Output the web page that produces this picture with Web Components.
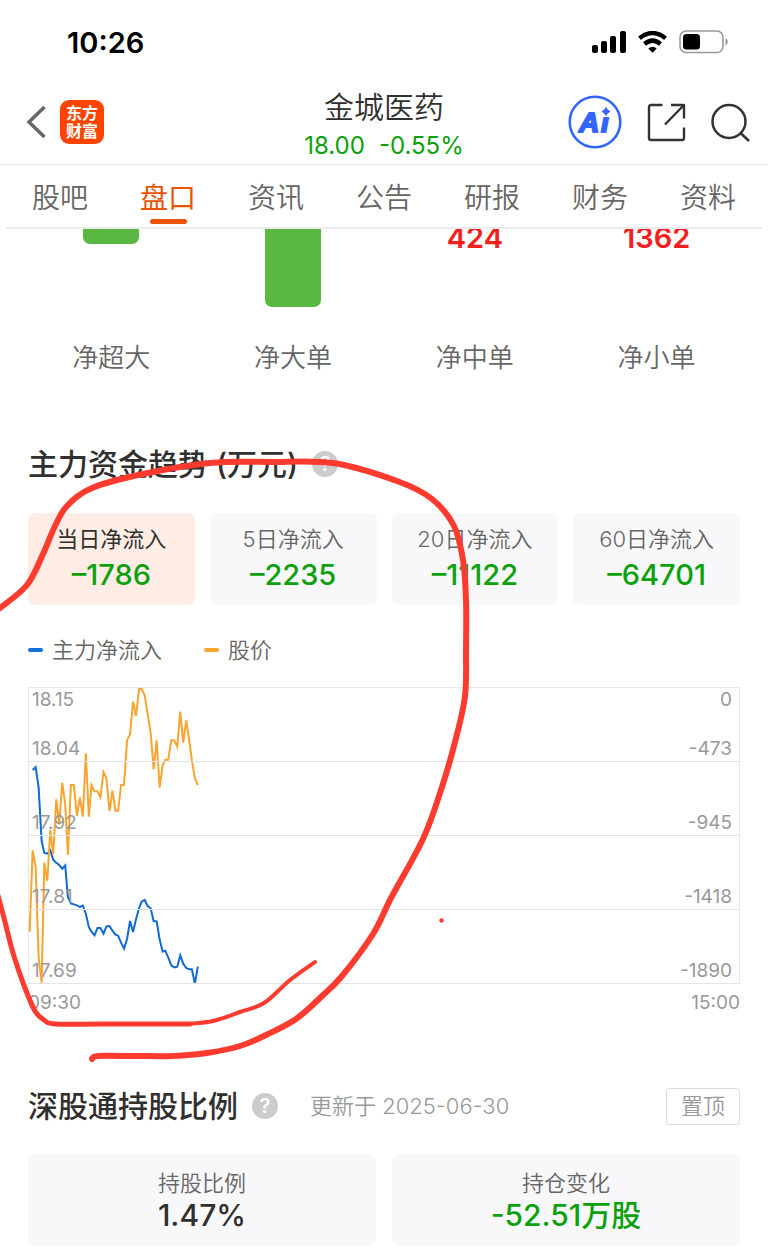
<!DOCTYPE html>
<html lang="zh-CN">
<head>
<meta charset="utf-8">
<meta name="viewport" content="width=device-width, initial-scale=1">
<title>金城医药</title>
<style>
  body {
    margin: 0;
    background: #fff;
    color: #303030;
    font-family: Inter, "Noto Sans CJK SC", sans-serif;
  }
</style>
</head>
<body>
<quote-page>
  <status-bar slot="top" time="10:26"></status-bar>
  <stock-header slot="top" name="金城医药" price="18.00" change="-0.55%"></stock-header>
  <page-tabs slot="top" labels="股吧,盘口,资讯,公告,研报,财务,资料" active="1"></page-tabs>

  <order-flow>
    <flow-item label="净超大" bar="15"></flow-item>
    <flow-item label="净大单" bar="78"></flow-item>
    <flow-item label="净中单" value="424"></flow-item>
    <flow-item label="净小单" value="1362"></flow-item>
  </order-flow>

  <section-title style="margin-top:70px">主力资金趋势 (万元)</section-title>
  <period-picker></period-picker>
  <trend-chart></trend-chart>

  <section-title style="margin-top:67px">深股通持股比例
    <span slot="note">更新于 2025-06-30</span>
    <pin-button slot="action">置顶</pin-button>
  </section-title>
  <stat-row>
    <stat-card label="持股比例" value="1.47%"></stat-card>
    <stat-card label="持仓变化" value="-52.51万股" down></stat-card>
  </stat-row>

  <ink-layer slot="ink"></ink-layer>
</quote-page>

<script>
class QuotePage extends HTMLElement {
  constructor() {
    super();
    this.attachShadow({ mode: "open" }).innerHTML =
`<style>
  :host {
    display: block;
    position: relative;
    overflow: hidden;
  }
  main {
    display: flex;
    flex-direction: column;
    padding: 0 28px 2px;
  }
</style>
<slot name="top"></slot>
<main><slot></slot></main>
<slot name="ink"></slot>`;
  }
}

class StatusBar extends HTMLElement {
  connectedCallback() {
    this.attachShadow({ mode: "open" }).innerHTML =
`<style>
  :host {
    display: flex;
    justify-content: space-between;
    align-items: center;
    box-sizing: border-box;
    height: 80px;
    padding: 4px 40px 0 67px;
    color: #000;
  }
  time {
    font-size: 29px;
    font-weight: 600;
  }
  .icons {
    display: flex;
    align-items: center;
    gap: 12px;
  }
</style>
<time>${this.getAttribute("time")}</time>
<div class="icons">
  <svg width="34" height="22" viewBox="0 0 34 22">
    <rect x="0" y="14" width="6" height="8" rx="2"/>
    <rect x="9" y="10" width="6" height="12" rx="2"/>
    <rect x="18" y="5" width="6" height="17" rx="2"/>
    <rect x="28" y="0" width="6" height="22" rx="2"/>
  </svg>
  <svg width="29" height="22" viewBox="0 0 29 22">
    <path d="M1.500 7.200Q14.500-3.200 27.500 7.200" fill="none" stroke="#000" stroke-width="4.400"/>
    <path d="M6.500 13Q14.500 6.200 22.500 13" fill="none" stroke="#000" stroke-width="4.400"/>
    <path d="M10.300 17.600Q14.500 14 18.700 17.600L14.500 21.800Z"/>
  </svg>
  <svg width="49" height="24" viewBox="0 0 49 24">
    <rect x="1" y="1" width="43" height="21.500" rx="6" fill="none" stroke="#999" stroke-width="1.600"/>
    <rect x="4" y="4" width="17" height="15.500" rx="3.500"/>
    <path d="M46.500 8v7.500q2.300-1.200 2.300-3.700t-2.300-3.800z" fill="#999"/>
  </svg>
</div>`;
  }
}

class StockHeader extends HTMLElement {
  connectedCallback() {
    this.attachShadow({ mode: "open" }).innerHTML =
`<style>
  :host {
    display: grid;
    grid-template-columns: 1fr auto 1fr;
    align-items: center;
    height: 84px;
    padding: 0 18px;
    border-bottom: 1px solid #ebebed;
  }
  button, a {
    display: block;
    padding: 0;
    border: 0;
    background: none;
    color: inherit;
    font: inherit;
    text-decoration: none;
  }
  svg {
    display: block;
  }
  .left, .right {
    display: flex;
    align-items: center;
  }
  .left {
    gap: 14px;
    padding-left: 8px;
  }
  .right {
    gap: 25px;
    justify-content: flex-end;
  }
  .logo {
    box-sizing: border-box;
    width: 44px;
    height: 44px;
    padding: 4px 0;
    border-radius: 9px;
    background: #ff4400;
    color: #fff;
    font-size: 16px;
    font-weight: 700;
    line-height: 18px;
    text-align: center;
  }
  .mid {
    align-self: end;
    text-align: center;
  }
  h1 {
    margin: 0;
    font-size: 30px;
    font-weight: 350;
    line-height: 42px;
  }
  p {
    display: flex;
    gap: 14px;
    margin: 0;
    color: #0ba10b;
    font-size: 24px;
    line-height: 36px;
  }
</style>
<div class="left">
  <button aria-label="返回">
    <svg width="20" height="34" viewBox="0 0 20 34" fill="none" stroke="#666" stroke-width="3.500"><path d="M18.500 2L3 17L18.500 32"/></svg>
  </button>
  <a class="logo" href="#">东方<br>财富</a>
</div>
<div class="mid">
  <h1>${this.getAttribute("name")}</h1>
  <p><span>${this.getAttribute("price")}</span><span>${this.getAttribute("change")}</span></p>
</div>
<div class="right">
  <button>
    <svg width="54" height="54" viewBox="0 0 54 54">
      <text x="11" y="37" font-family="Liberation Sans, sans-serif" font-size="28" font-weight="700" font-style="italic" fill="#3366ff" stroke="#3366ff" stroke-width="2" stroke-linejoin="round">A<tspan x="33">i</tspan></text>
      <path d="M33 11h11v11h-11z" fill="#fff"/>
      <circle cx="27" cy="27" r="25.300" fill="none" stroke="#3366ff" stroke-width="2.600"/>
      <path d="M38 12.500q1 3 4 4q-3 1-4 4q-1-3-4-4q3-1 4-4z" fill="#3366ff" stroke="#3366ff"/>
    </svg>
  </button>
  <button aria-label="分享">
    <svg width="39" height="39" viewBox="0 0 39 39" fill="none" stroke="#333" stroke-width="2.400" stroke-linejoin="round">
      <path d="M15.500 2H4Q2 2 2 4V35Q2 37 4 37H35Q37 37 37 35V24.500"/>
      <path d="M24 2H37V15.500M37 2L18 21.500"/>
    </svg>
  </button>
  <button aria-label="搜索">
    <svg width="39" height="39" viewBox="0 0 39 39" fill="none" stroke="#333" stroke-width="2.500">
      <circle cx="18" cy="18.500" r="16.500"/>
      <path d="M29.500 30L38 38"/>
    </svg>
  </button>
</div>`;
  }
}

class PageTabs extends HTMLElement {
  connectedCallback() {
    const active = Number(this.getAttribute("active"));
    const tabs = this.getAttribute("labels").split(",").map((t, i) =>
      `<button role="tab" aria-selected="${i === active}">${t}</button>`).join("");

    this.attachShadow({ mode: "open" }).innerHTML =
`<style>
  :host {
    display: block;
    padding: 0 6px;
  }
  div {
    display: flex;
    height: 62px;
    border-bottom: 2px solid #ebebed;
  }
  button {
    flex: 1;
    display: flex;
    flex-direction: column;
    align-items: center;
    justify-content: flex-end;
    padding: 0 0 3px;
    border: 0;
    background: none;
    color: #666;
    font: inherit;
    font-size: 28px;
    font-weight: 350;
    line-height: 42px;
  }
  button::after {
    content: "";
    width: 37px;
    height: 5px;
    border-radius: 3px;
  }
  [aria-selected="true"] {
    color: #ea5504;
    font-weight: 400;
  }
  [aria-selected="true"]::after {
    background: #ea5504;
  }
</style>
<div role="tablist">${tabs}</div>`;
  }
}

class OrderFlow extends HTMLElement {
  constructor() {
    super();
    this.attachShadow({ mode: "open" }).innerHTML =
`<style>
  :host {
    display: grid;
    grid-template-columns: repeat(4, 1fr);
    gap: 15px;
    overflow: hidden;
  }
</style>
<slot></slot>`;
  }
}

class FlowItem extends HTMLElement {
  connectedCallback() {
    const bar = this.getAttribute("bar");
    const body = bar
      ? `<i style="height:${bar}px"></i>`
      : `<b>${this.getAttribute("value")}</b>`;

    this.attachShadow({ mode: "open" }).innerHTML =
`<style>
  :host {
    display: flex;
    flex-direction: column;
    align-items: center;
  }
  .body {
    height: 111px;
  }
  i {
    display: block;
    width: 56px;
    border-radius: 0 0 7px 7px;
    background: #5ab842;
  }
  b {
    display: block;
    color: #f42020;
    font-size: 29px;
    font-weight: 600;
    line-height: 17px;
  }
  span {
    color: #666;
    font-size: 26px;
    font-weight: 350;
    line-height: 36px;
  }
</style>
<div class="body">${body}</div>
<span>${this.getAttribute("label")}</span>`;
  }
}

class SectionTitle extends HTMLElement {
  constructor() {
    super();
    this.attachShadow({ mode: "open" }).innerHTML =
`<style>
  :host {
    display: flex;
    align-items: center;
    height: 36px;
  }
  h2 {
    margin: 0 14px 0 0;
    font-size: 30px;
    font-weight: 500;
    line-height: 36px;
    white-space: nowrap;
  }
  button {
    width: 26px;
    height: 26px;
    padding: 0;
    border: 0;
    border-radius: 50%;
    background: #ccc;
    color: #fff;
    font: inherit;
    font-size: 20px;
    font-weight: 600;
    line-height: 26px;
  }
  ::slotted([slot="note"]) {
    margin-left: 32px;
    color: #999;
    font-size: 22px;
    font-weight: 350;
    line-height: 36px;
  }
  ::slotted([slot="action"]) {
    margin-left: auto;
  }
</style>
<h2><slot></slot></h2>
<button aria-label="说明">?</button>
<slot name="note"></slot>
<slot name="action"></slot>`;
  }
}

class PinButton extends HTMLElement {
  constructor() {
    super();
    this.attachShadow({ mode: "open" }).innerHTML =
`<style>
  :host {
    display: block;
  }
  button {
    display: block;
    height: 37px;
    padding: 0 14px;
    border: 1px solid #ddd;
    border-radius: 3px;
    background: #fff;
    color: #999;
    font: inherit;
    font-size: 22px;
    font-weight: 350;
    line-height: 35px;
  }
</style>
<button><slot></slot></button>`;
  }
}

class PeriodPicker extends HTMLElement {
  #periods = [
    ["当日净流入", "–1786"],
    ["5日净流入", "–2235"],
    ["20日净流入", "–11122"],
    ["60日净流入", "–64701"],
  ];

  connectedCallback() {
    this.attachShadow({ mode: "open" }).innerHTML =
`<style>
  :host {
    display: grid;
    grid-template-columns: repeat(4, 1fr);
    gap: 15px;
    margin-top: 31px;
  }
  button {
    min-width: 0;
    padding: 10px 0;
    border: 0;
    border-radius: 7px;
    background: #f8f8fb;
    color: #666;
    font: inherit;
    font-size: 22px;
    font-weight: 350;
    line-height: 32px;
  }
  button.on {
    background: #ffece5;
    color: #303030;
    font-weight: 400;
  }
  b {
    display: block;
    color: #0ba10b;
    font-size: 29px;
    font-weight: 500;
    line-height: 40px;
  }
</style>
${this.#periods.map(([label, value]) => `<button>${label}<b>${value}</b></button>`).join("\n")}`;

    const buttons = this.shadowRoot.querySelectorAll("button");
    const select = (on) => buttons.forEach((b) => b.classList.toggle("on", b === on));
    buttons.forEach((b) => b.addEventListener("click", () => select(b)));
    select(buttons[0]);
  }
}

// y runs from 0 (top) to 888 (bottom), one point per minute sample
const PRICE = [
  731, 487, 539, 809, 884, 524, 579, 426, 499, 334, 409, 284, 349, 501, 291,
  291, 384, 329, 386, 196, 386, 291, 310, 310, 328, 252, 272, 369, 309, 368,
  368, 291, 291, 157, 139, 41, 84, 3, 3, 22, 79, 134, 244, 157, 299, 232, 215,
  215, 157, 157, 176, 71, 164, 97, 157, 217, 271, 291,
];
const INFLOW = [
  246, 237, 299, 459, 495, 497, 487, 516, 524, 531, 542, 532, 627, 646, 649,
  652, 657, 653, 677, 717, 731, 742, 720, 720, 737, 715, 714, 728, 740, 743,
  764, 782, 753, 699, 732, 694, 661, 641, 636, 654, 661, 699, 700, 754, 791,
  788, 809, 832, 838, 836, 802, 827, 840, 844, 844, 887, 836,
];

class TrendChart extends HTMLElement {
  #line(values, start, color) {
    const step = 8.88;
    const points = values.map((y, i) => `${Math.round(2 + (i + start) * step)},${y}`).join(" ");
    return `<polyline points="${points}" stroke="${color}"/>`;
  }

  connectedCallback() {
    const rows = [["18.04", "-473"], ["17.92", "-945"], ["17.81", "-1418"], ["17.69", "-1890"]];

    this.attachShadow({ mode: "open" }).innerHTML =
`<style>
  :host {
    display: block;
    margin-top: 25px;
    color: #999;
    font-size: 19px;
  }
  .legend {
    display: flex;
    gap: 42px;
    margin-bottom: 17px;
    color: #666;
    font-size: 22px;
    font-weight: 350;
    line-height: 40px;
  }
  .legend span {
    display: flex;
    align-items: center;
    gap: 9px;
  }
  .legend span::before {
    content: "";
    width: 15px;
    height: 4px;
    border-radius: 2px;
    background: var(--c);
  }
  .plot {
    position: relative;
    border: 1px solid #e8e8e8;
    border-width: 1px 1px 0;
  }
  .row {
    position: relative;
    display: flex;
    flex-wrap: wrap;
    justify-content: space-between;
    align-content: flex-end;
    box-sizing: border-box;
    height: 74px;
    padding: 0 7px 0 3px;
    border-bottom: 1px solid #e3e3e3;
    line-height: 24px;
  }
  .row:nth-of-type(1) {
    align-content: space-between;
  }
  .row span {
    width: 50%;
  }
  .row span:nth-child(even) {
    text-align: right;
  }
  svg {
    position: absolute;
    inset: 0;
    width: 100%;
    height: 100%;
    overflow: visible;
  }
  polyline {
    fill: none;
    stroke-width: 2;
    vector-effect: non-scaling-stroke;
  }
  .time {
    display: flex;
    justify-content: space-between;
    line-height: 37px;
  }
</style>
<div class="legend">
  <span style="--c:#1271dc">主力净流入</span>
  <span style="--c:#faa32d">股价</span>
</div>
<div class="plot">
  <svg viewBox="0 0 2136 888" preserveAspectRatio="none">
    ${this.#line(INFLOW, 1, "#1169d4")}
    ${this.#line(PRICE, 0, "#f8a42f")}
  </svg>
  ${rows.map(([l, r], i) => `<div class="row">${i ? "" : "<span>18.15</span><span>0</span>"}<span>${l}</span><span>${r}</span></div>`).join("\n  ")}
</div>
<div class="time"><span>09:30</span><span>15:00</span></div>`;
  }
}

class StatRow extends HTMLElement {
  constructor() {
    super();
    this.attachShadow({ mode: "open" }).innerHTML =
`<style>
  :host {
    display: grid;
    grid-template-columns: 1fr 1fr;
    gap: 16px;
    margin-top: 30px;
  }
</style>
<slot></slot>`;
  }
}

class StatCard extends HTMLElement {
  connectedCallback() {
    this.attachShadow({ mode: "open" }).innerHTML =
`<style>
  :host {
    display: flex;
    flex-direction: column;
    align-items: center;
    padding: 13px 0 15px;
    border-radius: 7px;
    background: #f8f8fb;
    line-height: 32px;
  }
  span {
    color: #666;
    font-size: 22px;
    font-weight: 350;
  }
  b {
    font-size: 30px;
    font-weight: 500;
  }
  :host([down]) b {
    color: #0ba10b;
  }
</style>
<span>${this.getAttribute("label")}</span>
<b>${this.getAttribute("value")}</b>`;
  }
}

// freehand marker strokes above the whole page
class InkLayer extends HTMLElement {
  #strokes = [
    {
      width: 6,
      points: [
        [-6, 612], [0, 608], [27, 585], [43, 554], [55, 526], [67, 506], [92, 488],
        [143, 474], [210, 463], [270, 462], [333, 463], [397, 481], [432, 499],
        [454, 526], [463, 560], [466, 600], [466, 650], [465, 696], [455, 742],
        [441, 790], [423, 839], [391, 898], [373, 934], [342, 976], [322, 996],
        [296, 1019], [266, 1035], [240, 1046], [207, 1053], [173, 1056],
        [135, 1056], [98, 1056], [92, 1059],
      ],
    },
    {
      width: 5,
      points: [
        [-3, 892], [4, 918], [13, 953], [25, 988], [35, 1011], [44, 1020],
        [55, 1024], [100, 1024], [150, 1024], [190, 1024],
      ],
    },
    {
      width: 4,
      points: [[188, 1024], [213, 1021], [240, 1012], [264, 1003], [290, 980], [315, 962]],
    },
  ];

  // Catmull-Rom spline through the points
  #path(p) {
    let d = `M${p[0]}`;
    for (let i = 0; i < p.length - 1; i++) {
      const a = p[i - 1] || p[i];
      const b = p[i];
      const c = p[i + 1];
      const e = p[i + 2] || c;
      d += `C${b[0] + (c[0] - a[0]) / 6},${b[1] + (c[1] - a[1]) / 6} ${c[0] - (e[0] - b[0]) / 6},${c[1] - (e[1] - b[1]) / 6} ${c}`;
    }
    return d;
  }

  connectedCallback() {
    this.attachShadow({ mode: "open" }).innerHTML =
`<style>
  :host {
    display: block;
    position: absolute;
    inset: 0;
    z-index: 1;
    pointer-events: none;
  }
  svg {
    display: block;
    width: 100%;
    height: 100%;
  }
</style>
<svg viewBox="0 0 768 1248" preserveAspectRatio="none" fill="none" stroke="#ff3b30" stroke-linecap="round" stroke-linejoin="round">
  ${this.#strokes.map((s) => `<path d="${this.#path(s.points)}" stroke-width="${s.width}"/>`).join("\n  ")}
  <circle cx="441.500" cy="920.500" r="2.200" fill="#ff3b30" stroke="none"/>
</svg>`;
  }
}

customElements.define("quote-page", QuotePage);
customElements.define("status-bar", StatusBar);
customElements.define("stock-header", StockHeader);
customElements.define("page-tabs", PageTabs);
customElements.define("order-flow", OrderFlow);
customElements.define("flow-item", FlowItem);
customElements.define("section-title", SectionTitle);
customElements.define("pin-button", PinButton);
customElements.define("period-picker", PeriodPicker);
customElements.define("trend-chart", TrendChart);
customElements.define("stat-row", StatRow);
customElements.define("stat-card", StatCard);
customElements.define("ink-layer", InkLayer);
</script>
</body>
</html>
